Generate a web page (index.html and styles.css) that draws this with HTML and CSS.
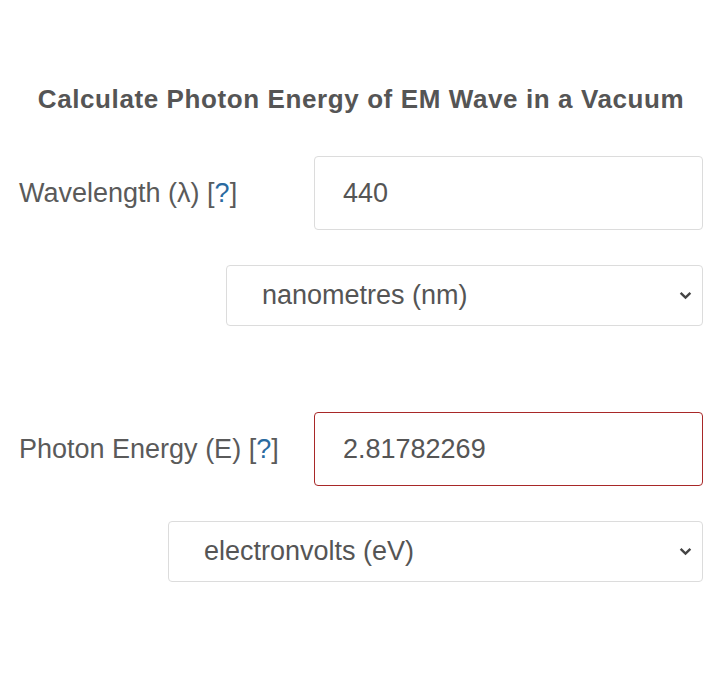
FILE: index.html
```html
<!DOCTYPE html>
<html>
<head>
<meta charset="utf-8">
<link rel="stylesheet" href="styles.css">
</head>
<body>
<div class="calc">
  <h2 class="title">Calculate Photon Energy of EM Wave in a Vacuum</h2>
  <div class="row row-first">
    <label class="label">Wavelength (λ) <a class="help">[<span class="q">?</span>]</a></label>
    <div class="field">440</div>
  </div>
  <div class="unit-row">
    <div class="select select-nm"><span>nanometres (nm)</span><svg class="chev" viewBox="0 0 12 8" width="13" height="9"><path d="M1.5 1.5 L6 6 L10.5 1.5" fill="none" stroke="#444" stroke-width="2.2"/></svg></div>
  </div>
  <div class="row row-second">
    <label class="label">Photon Energy (E) <a class="help">[<span class="q">?</span>]</a></label>
    <div class="field field-result">2.81782269</div>
  </div>
  <div class="unit-row">
    <div class="select select-ev"><span>electronvolts (eV)</span><svg class="chev" viewBox="0 0 12 8" width="13" height="9"><path d="M1.5 1.5 L6 6 L10.5 1.5" fill="none" stroke="#444" stroke-width="2.2"/></svg></div>
  </div>
</div>
</body>
</html>
```
FILE: styles.css
```css
html, body {
  margin: 0;
  padding: 0;
  background: #fff;
}
body {
  font-family: "Liberation Sans", Arial, sans-serif;
  color: #555;
}
.calc {
  padding: 80px 17px 0 19px;
}
.title {
  margin: 0;
  text-align: center;
  font-size: 26px;
  letter-spacing: 0.6px;
  font-weight: bold;
  color: #555;
  line-height: 38px;
}
.row {
  display: flex;
  align-items: center;
  justify-content: space-between;
}
.row-first {
  margin-top: 38px;
}
.row-second {
  margin-top: 86px;
}
.label {
  font-size: 27px;
  color: #5a5a5a;
}
.help {
  color: #5a5a5a;
  text-decoration: none;
}
.q {
  color: #2a6aa0;
}
.field {
  box-sizing: border-box;
  width: 389px;
  height: 74px;
  border: 1px solid #dcdcdc;
  border-radius: 4px;
  padding-left: 28px;
  display: flex;
  align-items: center;
  font-size: 27px;
  color: #555;
}
.field-result {
  border: 1px solid #a82828;
}
.unit-row {
  display: flex;
  justify-content: flex-end;
  margin-top: 35px;
}
.select {
  box-sizing: border-box;
  height: 61px;
  border: 1px solid #dcdcdc;
  border-radius: 4px;
  display: flex;
  align-items: center;
  justify-content: space-between;
  padding: 0 10px 0 35px;
  font-size: 27px;
  color: #555;
}
.select-nm {
  width: 477px;
}
.select-ev {
  width: 535px;
}
.chev {
  display: block;
}
```
